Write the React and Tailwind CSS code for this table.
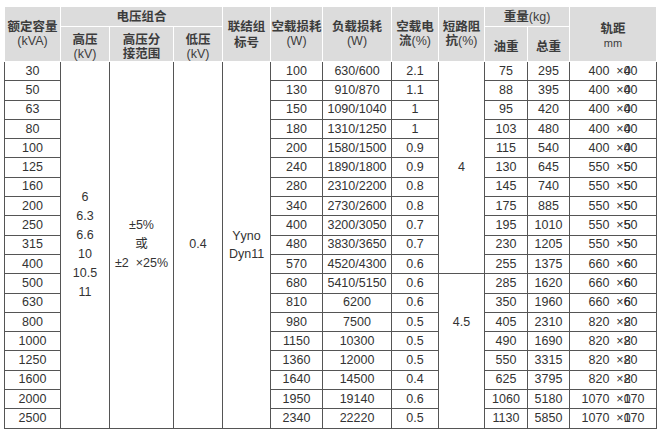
import React from "react";

const rows = [
  ["30", "100", "630/600", "2.1", "75", "295", "400", "400"],
  ["50", "130", "910/870", "1.1", "88", "395", "400", "400"],
  ["63", "150", "1090/1040", "1", "95", "420", "400", "400"],
  ["80", "180", "1310/1250", "1", "103", "480", "400", "400"],
  ["100", "200", "1580/1500", "0.9", "115", "540", "400", "400"],
  ["125", "240", "1890/1800", "0.9", "130", "645", "550", "550"],
  ["160", "280", "2310/2200", "0.8", "145", "740", "550", "550"],
  ["200", "340", "2730/2600", "0.8", "175", "885", "550", "550"],
  ["250", "400", "3200/3050", "0.7", "195", "1010", "550", "550"],
  ["315", "480", "3830/3650", "0.7", "230", "1205", "550", "550"],
  ["400", "570", "4520/4300", "0.6", "255", "1375", "660", "660"],
  ["500", "680", "5410/5150", "0.6", "285", "1620", "660", "660"],
  ["630", "810", "6200", "0.6", "350", "1960", "660", "660"],
  ["800", "980", "7500", "0.5", "405", "2310", "820", "820"],
  ["1000", "1150", "10300", "0.5", "490", "1690", "820", "820"],
  ["1250", "1360", "12000", "0.5", "550", "3315", "820", "820"],
  ["1600", "1640", "14500", "0.4", "625", "3795", "820", "820"],
  ["2000", "1950", "19140", "0.6", "1060", "5180", "1070", "1070"],
  ["2500", "2340", "22220", "0.5", "1130", "5850", "1070", "1070"],
];

const th = "border border-white bg-[#dcdcdc] p-0 text-center align-top font-normal text-[#3c3c3c] text-[12.5px]";
const big = th + " pt-[13px]";
const top = th + " pt-[3px]";
const sub = th + " pt-[6px]";
const td = "border border-[#555] p-0 text-center align-middle text-[12.5px] leading-[15px] text-[#333]";

// one header line, fixed height so mixed fonts don't stretch it
function L({ children, className = "" }) {
  return <div className={"h-[14px] leading-[14px] whitespace-nowrap " + className}>{children}</div>;
}

// Chinese header words are set heavier than the latin bits
function Zh({ children }) {
  return <span className="font-bold">{children}</span>;
}

// the second figure of the gauge has its first digit printed over the next one
function Gauge({ a, b }) {
  return (
    <span>
      {a} {"\u00a0"}×<span className="inline-block w-0">{b[0]}</span>
      {b.slice(1)}
    </span>
  );
}

export default function App() {
  return (
    <div className="w-[665px] h-[436px] bg-white pl-[4px] pt-[6px] font-['Liberation_Sans','Noto_Sans_CJK_SC',sans-serif]">
      <table className="table-fixed border-collapse w-[652px]">
        <colgroup>
          <col className="w-[56px]" />
          <col className="w-[49px]" />
          <col className="w-[64px]" />
          <col className="w-[49px]" />
          <col className="w-[48px]" />
          <col className="w-[52px]" />
          <col className="w-[69px]" />
          <col className="w-[47px]" />
          <col className="w-[46px]" />
          <col className="w-[43px]" />
          <col className="w-[42px]" />
          <col className="w-[87px]" />
        </colgroup>
        <thead>
          <tr className="h-[20px]">
            <th rowSpan={2} className={big}>
              <L><Zh>额定容量</Zh></L>
              <L>(kVA)</L>
            </th>
            <th colSpan={3} className={top}>
              <L><Zh>电压组合</Zh></L>
            </th>
            <th rowSpan={2} className={big}>
              <L><Zh>联结组</Zh></L>
              <L className="mt-[2px]"><Zh>标号</Zh></L>
            </th>
            <th rowSpan={2} className={big}>
              <L><Zh>空载损耗</Zh></L>
              <L>(W)</L>
            </th>
            <th rowSpan={2} className={big}>
              <L><Zh>负载损耗</Zh></L>
              <L>(W)</L>
            </th>
            <th rowSpan={2} className={big}>
              <L><Zh>空载电</Zh></L>
              <L><Zh>流</Zh>(%)</L>
            </th>
            <th rowSpan={2} className={big}>
              <L><Zh>短路阻</Zh></L>
              <L><Zh>抗</Zh>(%)</L>
            </th>
            <th colSpan={2} className={top}>
              <L><Zh>重量</Zh>(kg)</L>
            </th>
            <th rowSpan={2} className={th + " pt-[15px]"}>
              <L><Zh>轨距</Zh></L>
              <L className="text-[11px] h-[12px] leading-[12px]">mm</L>
            </th>
          </tr>
          <tr className="h-[34px]">
            <th className={sub}>
              <L><Zh>高压</Zh></L>
              <L>(kV)</L>
            </th>
            <th className={sub}>
              <L><Zh>高压分</Zh></L>
              <L><Zh>接范围</Zh></L>
            </th>
            <th className={sub}>
              <L><Zh>低压</Zh></L>
              <L>(kV)</L>
            </th>
            <th className={th + " pt-[13px]"}>
              <L><Zh>油重</Zh></L>
            </th>
            <th className={th + " pt-[13px]"}>
              <L><Zh>总重</Zh></L>
            </th>
          </tr>
        </thead>
        <tbody>
          {rows.map((r, i) => (
            <tr key={i} className="h-[19.3px]">
              <td className={td}>{r[0]}</td>
              {i === 0 && (
                <>
                  <td rowSpan={19} className={td + " leading-[19px]"}>
                    6<br />6.3<br />6.6<br />10<br />10.5<br />11
                  </td>
                  <td rowSpan={19} className={td + " leading-[19px]"}>
                    ±5%
                    <br />或<br />
                    ±2 {"\u00a0"}×25%
                  </td>
                  <td rowSpan={19} className={td}>
                    0.4
                  </td>
                  <td rowSpan={19} className={td + " leading-[18px]"}>
                    Yyno
                    <br />
                    Dyn11
                  </td>
                </>
              )}
              <td className={td}>{r[1]}</td>
              <td className={td}>{r[2]}</td>
              <td className={td}>{r[3]}</td>
              {i === 0 && (
                <td rowSpan={11} className={td}>
                  4
                </td>
              )}
              {i === 11 && (
                <td rowSpan={8} className={td + " align-top pt-[41px]"}>
                  4.5
                </td>
              )}
              <td className={td}>{r[4]}</td>
              <td className={td}>{r[5]}</td>
              <td className={td}>
                <Gauge a={r[6]} b={r[7]} />
              </td>
            </tr>
          ))}
        </tbody>
      </table>
    </div>
  );
}
